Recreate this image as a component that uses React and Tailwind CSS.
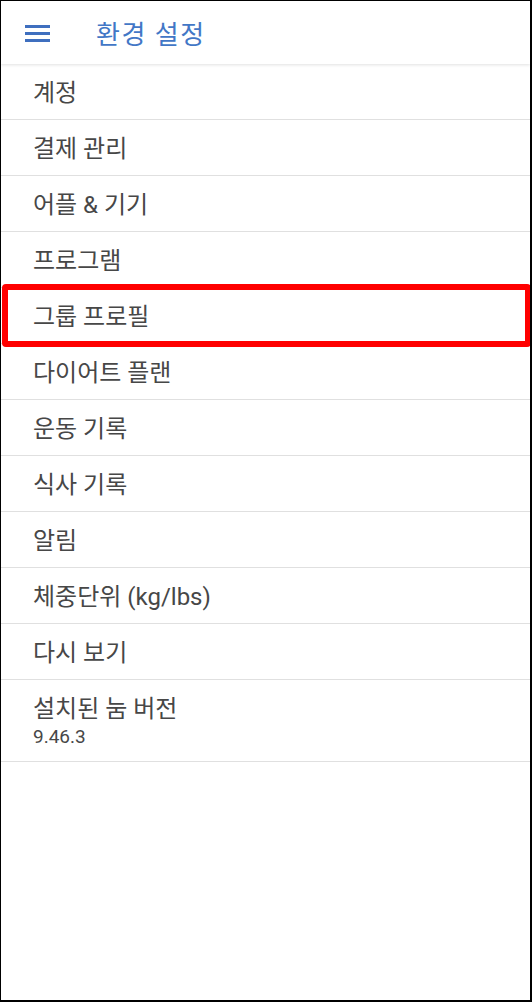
import React from "react";

const items = [
  "계정",
  "결제 관리",
  "어플 & 기기",
  "프로그램",
  "그룹 프로필",
  "다이어트 플랜",
  "운동 기록",
  "식사 기록",
  "알림",
  "체중단위 (kg/lbs)",
  "다시 보기",
];

export default function App() {
  return (
    <div
      className="relative w-[532px] h-[1002px] bg-white border-l border-t border-r-2 border-b-2 border-black overflow-hidden"
      style={{ fontFamily: 'Roboto, "Noto Sans CJK KR", sans-serif' }}
    >
      <div className="relative z-10 h-[63px] flex items-center bg-white shadow-[0_1px_3px_rgba(0,0,0,0.12)]">
        <div className="ml-[24px] mt-[1px] w-[25px] flex flex-col gap-[4px]">
          <div className="h-[3px] bg-[#3f6fbf]" />
          <div className="h-[3px] bg-[#3f6fbf]" />
          <div className="h-[3px] bg-[#3f6fbf]" />
        </div>
        <div className="ml-[46px] mt-[5px] text-[26px] text-[#4277c6] leading-none tracking-[1.5px]">
          환경 설정
        </div>
      </div>
      <div className="flex flex-col">
        {items.map((t) => (
          <div
            key={t}
            className="h-[56px] flex items-center pl-[32px] pt-[2px] border-b border-[#e0e0e0] text-[24px] text-[#474747] leading-none"
          >
            {t}
          </div>
        ))}
        <div className="h-[82px] flex flex-col justify-center pl-[32px] border-b border-[#e0e0e0] text-[#474747]">
          <div className="text-[24px] leading-[32px]">설치된 눔 버전</div>
          <div className="text-[19px] leading-[24px]">9.46.3</div>
        </div>
      </div>
      <div className="absolute left-[1px] top-[283px] w-[529px] h-[63px] border-[6px] border-[#ff0000] rounded-[4px]" />
    </div>
  );
}
